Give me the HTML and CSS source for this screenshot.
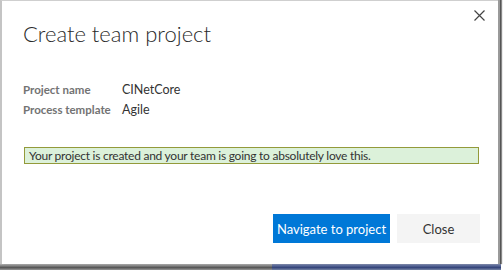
FILE: index.html
```html
<!DOCTYPE html>
<html>
<head>
<meta charset="utf-8">
<link rel="stylesheet" href="styles.css">
</head>
<body>
<div class="screen">
  <div class="dialog">
    <div class="topbar">
      <button class="close-x" aria-label="Close">
        <svg width="11" height="11" viewBox="0 0 11 11"><path d="M0.5 0.5 L10.5 10.5 M10.5 0.5 L0.5 10.5" stroke="#444" stroke-width="1.2" fill="none"/></svg>
      </button>
    </div>
    <h1 class="title">Create team project</h1>
    <div class="fields">
      <div class="label">Project name</div><div class="value">CINetCore</div>
      <div class="label">Process template</div><div class="value">Agile</div>
    </div>
    <div class="message">Your project is created and your team is going to absolutely love this.</div>
    <div class="actions">
      <button class="btn primary">Navigate to project</button>
      <button class="btn secondary">Close</button>
    </div>
  </div>
  <div class="under">
    <div class="under-left"></div>
    <div class="under-right"></div>
  </div>
</div>
</body>
</html>
```
FILE: styles.css
```css
* { box-sizing: border-box; }
html, body { margin: 0; padding: 0; background: #ffffff; }
body {
  width: 504px;
  height: 273px;
  overflow: hidden;
  font-family: Lato, "Open Sans", sans-serif;
  color: #333;
}
.screen { display: flex; flex-direction: column; width: 504px; }
.dialog {
  width: 498px;
  height: 264px;
  background: #fff;
  border-left: 2px solid #c4c4c4;
  border-top: 1px solid #cfcfcf;
  box-shadow: 2px 0 0 #9a9a9a, 3px 0 0 #555, 4px 0 1px #888;
  padding: 0 20px 0 21px;
  display: flex;
  flex-direction: column;
  position: relative;
  z-index: 1;
  white-space: nowrap;
}
.topbar { height: 0; display: flex; justify-content: flex-end; }
.close-x {
  margin-top: 9px;
  margin-right: -7px;
  width: 11px;
  height: 11px;
  padding: 0;
  border: 0;
  background: none;
  display: flex;
}
.title {
  margin: 18px 0 0 0;
  font-weight: 300;
  font-size: 22px;
  line-height: 30px;
  color: #2a2a2a;
}
.fields {
  margin-top: 31px;
  display: grid;
  grid-template-columns: 99px auto;
  font-size: 11.5px;
  line-height: 20px;
}
.label { font-weight: 700; color: #737373; }
.value { color: #333; font-size: 12.5px; }
.message {
  margin-top: 27px;
  margin-left: 1px;
  width: 455px;
  height: 17px;
  background: #dcf1da;
  border: 1px solid #939a3a;
  font-size: 12px;
  letter-spacing: -0.25px;
  line-height: 15px;
  padding-left: 4px;
  color: #333;
}
.actions {
  margin-top: 50px;
  display: flex;
  justify-content: flex-end;
  gap: 7px;
  margin-right: -2px;
}
.btn {
  height: 29px;
  border: 0;
  font-family: inherit;
  font-size: 13px;
  padding: 0;
  white-space: nowrap;
}
.primary { width: 117px; background: #0078d7; color: #fff; }
.secondary { width: 83px; background: #f4f4f4; color: #333; }
.under { display: flex; height: 6px; width: 501px; }
.under-left { width: 272px; background: linear-gradient(#b0b0b0, #555 60%, #999); }
.under-right { flex: 1; background: linear-gradient(#7a88b0, #34447a 60%, #7a88a8); }
```
